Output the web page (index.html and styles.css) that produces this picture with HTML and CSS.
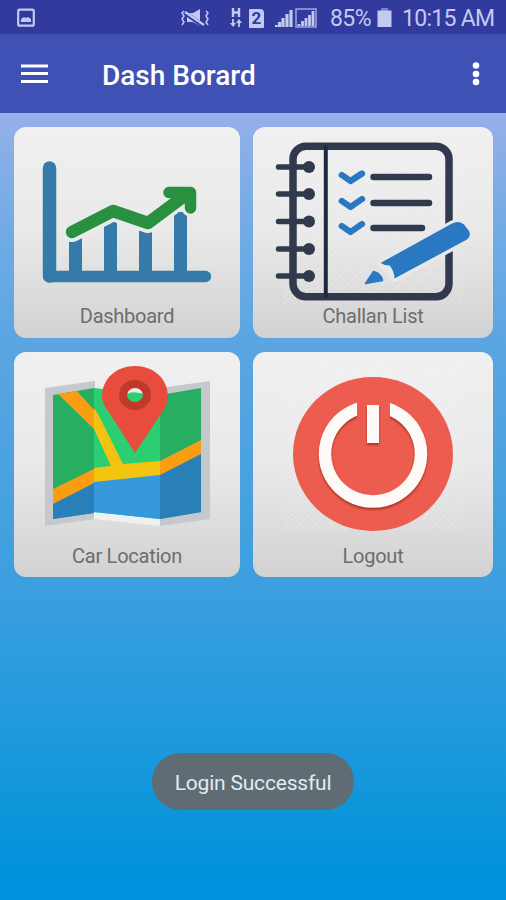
FILE: index.html
```html
<!DOCTYPE html>
<html lang="en">
<head>
<meta charset="utf-8">
<title>Dash Borard</title>
<link rel="stylesheet" href="styles.css">
</head>
<body>
<div class="screen">
  <header>
    <div class="status">
      <svg class="picture" width="18" height="20" viewBox="0 0 18 20"><rect x="1.2" y="1.7" width="15.6" height="16" rx="1.5" fill="none" stroke="currentColor" stroke-width="2.2"/><path d="M4 14V11l3-2 2 1 2-1 3 2v3z" fill="currentColor"/></svg>
      <svg class="mute" width="28" height="18" viewBox="0 0 28 18"><path d="M6 4h6l7-4v17l-7-4H6z" fill="currentColor"/><path d="M4 4l19 13" stroke="#303b9d" stroke-width="4.500"/><path d="M4 3l19 13" stroke="currentColor" stroke-width="2.400"/><path d="M3 2L1 4l2 3-2 3 2 3-2 3M25 2l2 2-2 3 2 3-2 3 2 3" fill="none" stroke="currentColor" stroke-width="1.500"/></svg>
      <svg class="data" width="12" height="20" viewBox="0 0 12 20"><path d="M3 0v9M9 0v9M3 4.500h6" fill="none" stroke="currentColor" stroke-width="2.400"/><path d="M3 11v6M9 19v-6" stroke="currentColor" stroke-width="1.800"/><path d="M0 15h6l-3 4zM6 15h6l-3-4z" fill="currentColor"/></svg>
      <span class="sim">2</span>
      <svg class="signal" width="18" height="18" viewBox="0 0 18 18"><path d="M1 18v-2M4.500 18v-5M8 18V9M12 18V5M16 18V1" stroke="currentColor" stroke-width="3.200"/></svg>
      <svg class="signal2" width="22" height="20" viewBox="0 0 22 20"><path d="M1 1h20v18H1z" fill="none" stroke="currentColor" stroke-width="1.500" opacity=".75"/><path d="M4 18v-2M7.500 18v-5M11 18V10M14.500 18V7M18 18V3" stroke="currentColor" stroke-width="2.800"/></svg>
      <span class="percent">85%</span>
      <svg class="battery" width="15" height="20" viewBox="0 0 15 20"><path d="M4 0h7v3H4z" fill="currentColor" opacity=".5"/><path d="M.5 2.500h14V19H.5z" fill="currentColor"/></svg>
      <span class="time">10:15 AM</span>
    </div>
    <div class="toolbar">
      <svg class="menu" width="27" height="22" viewBox="0 0 27 22"><path d="M0 3h27M0 10.500h27M0 18.500h27" stroke="#fff" stroke-width="3.200"/></svg>
      <h1>Dash Borard</h1>
      <svg class="more" width="8" height="26" viewBox="0 0 8 26"><g fill="#fff"><circle cx="4" cy="4.500" r="3.300"/><circle cx="4" cy="13" r="3.300"/><circle cx="4" cy="21" r="3.300"/></g></svg>
    </div>
  </header>
  <main>
    <div class="card">
      <svg viewBox="14 127 226 177">
        <g fill="none" stroke-linecap="round" stroke-linejoin="round">
          <path d="M75.500 277V237M110.500 277V220M145.500 277V230M180.500 277V212" stroke="#357ba9" stroke-width="13" stroke-linecap="butt"/>
          <path d="M72 232L113 211L148 223L186 194" stroke="#ebebeb" stroke-width="20"/>
          <path d="M190 193V208" stroke="#ebebeb" stroke-width="17"/>
          <path d="M49.500 168V276" stroke="#357ba9" stroke-width="13.500"/>
          <path d="M49 276.500H205.500" stroke="#357ba9" stroke-width="11.500"/>
          <path d="M72 232L113 211L148 223L187 194" stroke="#299040" stroke-width="12.500"/>
          <path d="M169 192.500H190.500V208" stroke="#299040" stroke-width="11.500"/>
          <path d="M172 192H190V207z" fill="#299040"/>
        </g>
      </svg>
      <p>Dashboard</p>
    </div>
    <div class="card textured">
      <svg viewBox="253 127 240 177">
        <g fill="none" stroke="#303a4c" stroke-linecap="round" stroke-linejoin="round">
          <rect x="293" y="146.200" width="156" height="150.600" rx="13" stroke-width="7.500"/>
          <path d="M325.800 147V296" stroke="#1e2940" stroke-width="4"/>
          <path d="M278.500 167H309M278.500 194H309M278.500 221.500H309M278.500 249H309M278.500 276H309" stroke-width="5.500"/>
          <path d="M373.500 177H429M373.500 203H429M373.500 228H422" stroke-width="6.500"/>
          <path d="M341.800 175L350.500 181L362 173.500M341.800 201L350.500 207L362 199M341.800 226L350.500 232L362 224" stroke="#2b78c2" stroke-width="6.300"/>
        </g>
        <g fill="#303a4c"><circle cx="309" cy="167" r="6"/><circle cx="309" cy="194" r="6"/><circle cx="309" cy="221.500" r="6"/><circle cx="309" cy="249" r="6"/><circle cx="309" cy="276" r="6"/></g>
        <path d="M380 263L452 223Q460 219 464 224L470 231V239L394 280z" fill="#e8e8e8" stroke="#e8e8e8" stroke-width="5" stroke-linejoin="round"/>
        <path d="M380.500 263L452 223.500Q459 220 464 224.500L469 231Q471.500 236 467 239.500L394.500 278.500Q394 270 389.500 265.500Q385 265.500 380.500 263z" fill="#2b78c2"/>
        <path d="M365.500 283.500L373.500 271.500Q382 274 382.500 280.500z" fill="#2b78c2" stroke="#2b78c2" stroke-width="1.500" stroke-linejoin="round"/>
      </svg>
      <p>Challan List</p>
    </div>
    <div class="card">
      <svg viewBox="14 352 226 192">
        <path d="M45 388L95 381V519L45 526zM160 388L210 381V519L160 526z" fill="#c5c9cd"/>
        <path d="M94 512L160 519V526L94 519z" fill="#edf1f2"/>
        <path d="M53 395L94 388V513L53 519z" fill="#27ae60"/>
        <path d="M94 388L160 395V519L94 512z" fill="#2bcf72"/>
        <path d="M160 395L201 388V512L160 519z" fill="#27ae60"/>
        <path d="M53 503L94 482V513L53 519zM160 474L201 453V512L160 519z" fill="#2980b9"/>
        <path d="M94 481L160 474V519L94 512z" fill="#3498db"/>
        <path d="M58 394L77 391L94 410V429zM53 489L94 469V483L53 504zM160 461L201 440V454L160 475z" fill="#f99d12"/>
        <path d="M94 408L98 414L123 464L160 461V475L94 482V468L111 466L94 429z" fill="#f2c40f"/>
        <path fill-rule="evenodd" d="M135 453L108 411C103 404 102 399 102 397C102 378 117 366 135 366S168 378 168 397C168 401 166 406 163 411zM143 395A8 8 0 1 0 127 395A8 8 0 1 0 143 395z" fill="#e84c3d"/>
        <path d="M127 394Q128 387 135 387T143 394Q135 390 127 394z" fill="#e9eded"/>
        <ellipse cx="135" cy="395" rx="12" ry="11" fill="none" stroke="#c1392b" stroke-width="8"/>
      </svg>
      <p>Car Location</p>
    </div>
    <div class="card textured">
      <svg viewBox="253 352 240 192">
        <ellipse cx="373" cy="454" rx="80" ry="77" fill="#ed5d4f"/>
        <path class="raised" d="M363 407.500A48 47.500 0 1 0 383 407.500" fill="none" stroke="#fdfaf7" stroke-width="12.500"/>
        <path d="M357 398H390V426H357z" fill="#ed5d4f"/>
        <path class="raised" d="M367 405H379V443H367z" fill="#fdfaf7"/>
      </svg>
      <p>Logout</p>
    </div>
  </main>
  <div class="toast">Login Successful</div>
</div>
</body>
</html>
```
FILE: styles.css
```css
* { box-sizing: border-box; }
body { margin: 0; font-family: Roboto, "Liberation Sans", sans-serif; }
h1, p { margin: 0; }
svg { display: block; flex: none; }
.screen {
  width: 506px;
  height: 900px;
  display: flex;
  flex-direction: column;
  background: linear-gradient(#96b0e8 113px, #71abe5 230px, #5aa5e2 345px, #3d9fdf 580px, #1d99dd 740px, #0a94da 830px, #0092dc 880px);
}
header { height: 113px; background: #3f51b5; color: #c3c9f1; }
.status {
  height: 34px;
  display: flex;
  align-items: center;
  padding: 2px 0 0 17px;
  background: #303b9d;
  font-size: 23px;
  line-height: 32px;
  white-space: nowrap;
}
.mute { margin-left: 146px; }
.data { margin-left: 21px; }
.sim {
  width: 15px;
  height: 19px;
  margin-left: 7px;
  border-radius: 1px 4px 1px 1px;
  background: #c3c9f1;
  color: #303b9d;
  font-size: 17px;
  font-weight: 700;
  line-height: 19px;
  text-align: center;
}
.signal { margin-left: 11px; }
.signal2 { margin-left: 2px; }
.percent { width: 42px; margin-left: 13px; padding-top: 2px; letter-spacing: -0.6px; }
.battery { margin-left: 5px; }
.time { margin-left: 10px; padding-top: 2px; letter-spacing: -0.7px; }
.toolbar {
  height: 79px;
  display: flex;
  align-items: center;
  padding: 0 26px 0 21px;
}
.menu { margin-top: 1px; }
.toolbar h1 {
  margin-left: 54px;
  padding-top: 4px;
  color: #fff;
  font-size: 28px;
  font-weight: 500;
  line-height: 36px;
}
.more { margin-left: auto; }
main {
  display: grid;
  grid-template-columns: 226px 240px;
  grid-template-rows: 211px 225px;
  gap: 14px 13px;
  padding: 14px 0 0 14px;
}
.card {
  overflow: hidden;
  border-radius: 12px;
  background: linear-gradient(#f0f0f0, #e9e9e9 50%, #d2d2d2);
  color: #6d6d6d;
  font-size: 20px;
  line-height: 24px;
  letter-spacing: -0.25px;
  text-align: center;
}
.card svg { width: 100%; }
.textured svg {
  background: repeating-linear-gradient(135deg, transparent 0 3px, rgba(255, 255, 255, .18) 3px 4px) center 14px / 180px 165px no-repeat;
}
.raised { filter: drop-shadow(0 2px 1px rgba(140, 25, 15, .65)); }
.toast {
  width: 202px;
  height: 57px;
  margin: 176px 0 0 152px;
  border-radius: 29px;
  background: #5f6c73;
  color: #e4eaed;
  font-size: 21px;
  line-height: 60px;
  letter-spacing: -0.2px;
  text-align: center;
  white-space: nowrap;
}
```
